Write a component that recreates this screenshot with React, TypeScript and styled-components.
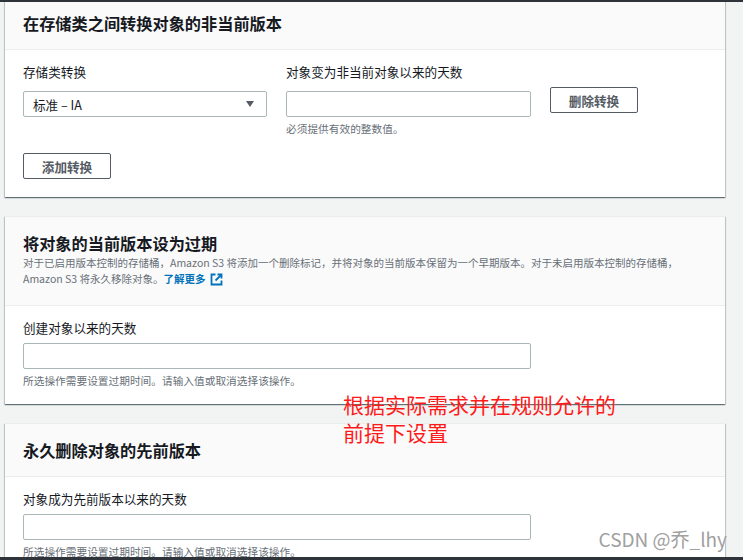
import React from 'react';
import styled, { createGlobalStyle } from 'styled-components';

const Global = createGlobalStyle`
  html, body { margin: 0; padding: 0; background: #f2f3f3; }
  body {
    font-family: "Noto Sans CJK SC", "Noto Sans", sans-serif;
    color: #16191f;
    overflow: hidden;
    height: 560px;
  }
`;

const Edge = styled.div<{ $side: 'top' | 'bottom'; $h: number }>`
  position: fixed;
  left: 0;
  right: 0;
  ${(p) => p.$side}: 0;
  height: ${(p) => p.$h}px;
  background: #2f343b;
  z-index: 5;
`;

const Page = styled.main`
  width: 720px;
  margin: -4px 0 0 5px;
  display: flex;
  flex-direction: column;
  gap: 19px;
`;

const Card = styled.section`
  background: #ffffff;
  border-top: 1px solid #eaeded;
  box-shadow: 0 1px 1px 0 rgba(0, 28, 36, 0.45), 1px 1px 1px 0 rgba(0, 28, 36, 0.15),
    -1px 1px 1px 0 rgba(0, 28, 36, 0.15);
`;

const Header = styled.header<{ $desc?: boolean }>`
  background: #fafafa;
  border-bottom: 1px solid #eaeded;
  padding: 15px 18px ${(p) => (p.$desc ? 18 : 15)}px;
`;

const Title = styled.h2`
  margin: 0;
  font-size: 16.2px;
  line-height: 22px;
  font-weight: 700;
  color: #16191f;
`;

const Desc = styled.p`
  margin: 1px 0 0;
  font-size: 10.5px;
  line-height: 16px;
  color: #687078;
`;

const Link = styled.a`
  color: #0073bb;
  font-weight: 700;
  text-decoration: none;
  display: inline-flex;
  align-items: center;
  gap: 5px;
  svg { display: block; }
`;

const Body = styled.div<{ $bottom: number }>`
  padding: 13px 18px ${(p) => p.$bottom}px;
`;

const Row = styled.div`
  display: grid;
  grid-template-columns: 244px 245px 88px;
  column-gap: 19px;
  align-items: start;
`;

const Field = styled.div<{ $width?: number }>`
  display: flex;
  flex-direction: column;
  width: ${(p) => (p.$width ? `${p.$width}px` : 'auto')};
`;

const Label = styled.label<{ $gap: number }>`
  font-size: 12.6px;
  line-height: 18px;
  color: #16191f;
  margin-bottom: ${(p) => p.$gap}px;
`;

const Input = styled.div`
  box-sizing: border-box;
  height: 26px;
  border: 1px solid #aab7b8;
  border-radius: 2px;
  background: #fff;
`;

const Select = styled(Input)`
  display: flex;
  align-items: center;
  justify-content: space-between;
  padding: 0 12px 0 9px;
  font-size: 12.6px;
  color: #16191f;
`;

const Caret = styled.span`
  width: 0;
  height: 0;
  border-left: 4px solid transparent;
  border-right: 4px solid transparent;
  border-top: 6px solid #545b64;
`;

const Hint = styled.div`
  margin-top: 5px;
  font-size: 10.7px;
  line-height: 14px;
  color: #687078;
`;

const Button = styled.button<{ $top?: number }>`
  box-sizing: border-box;
  width: 88px;
  height: 26px;
  margin-top: ${(p) => p.$top ?? 0}px;
  border: 1px solid #545b64;
  border-radius: 2px;
  background: #fff;
  color: #545b64;
  font-family: inherit;
  font-size: 12.6px;
  font-weight: 700;
  padding: 0;
  cursor: pointer;
`;

const Note = styled.div`
  position: absolute;
  left: 343px;
  top: 390px;
  font-size: 21px;
  line-height: 28px;
  color: #ff1a1a;
  z-index: 3;
`;

const Watermark = styled.div`
  position: absolute;
  right: 16px;
  top: 528px;
  font-size: 19px;
  line-height: 22px;
  color: #a0a0a0;
  text-shadow: 0 0 1px #ffffff;
  z-index: 3;
`;

const ExternalIcon = () => (
  <svg width="13" height="13" viewBox="0 0 13 13" fill="none" stroke="#0073bb" strokeWidth="1.8">
    <path d="M5.5 1.5H1.5v10h10v-4" />
    <path d="M7.5 1.5h4v4" />
    <path d="M11.5 1.5 5.5 7.5" />
  </svg>
);

export default function App() {
  return (
    <>
      <Global />
      <Edge $side="top" $h={2} />
      <Page>
        <Card>
          <Header>
            <Title>在存储类之间转换对象的非当前版本</Title>
          </Header>
          <Body $bottom={18}>
            <Row>
              <Field>
                <Label $gap={10}>存储类转换</Label>
                <Select>
                  <span>标准 – IA</span>
                  <Caret />
                </Select>
              </Field>
              <Field>
                <Label $gap={10}>对象变为非当前对象以来的天数</Label>
                <Input />
                <Hint>必须提供有效的整数值。</Hint>
              </Field>
              <Button $top={24}>删除转换</Button>
            </Row>
            <Button $top={17}>添加转换</Button>
          </Body>
        </Card>

        <Card>
          <Header $desc>
            <Title>将对象的当前版本设为过期</Title>
            <Desc>
              对于已启用版本控制的存储桶，Amazon S3 将添加一个删除标记，并将对象的当前版本保留为一个早期版本。对于未启用版本控制的存储桶，
              <br />
              Amazon S3 将永久移除对象。
              <Link href="#">
                了解更多
                <ExternalIcon />
              </Link>
            </Desc>
          </Header>
          <Body $bottom={16}>
            <Field $width={508}>
              <Label $gap={6}>创建对象以来的天数</Label>
              <Input />
              <Hint>所选操作需要设置过期时间。请输入值或取消选择该操作。</Hint>
            </Field>
          </Body>
        </Card>

        <Card>
          <Header>
            <Title>永久删除对象的先前版本</Title>
          </Header>
          <Body $bottom={16}>
            <Field $width={508}>
              <Label $gap={6}>对象成为先前版本以来的天数</Label>
              <Input />
              <Hint>所选操作需要设置过期时间。请输入值或取消选择该操作。</Hint>
            </Field>
          </Body>
        </Card>
      </Page>
      <Note>
        根据实际需求并在规则允许的
        <br />
        前提下设置
      </Note>
      <Watermark>CSDN @乔_lhy</Watermark>
      <Edge $side="bottom" $h={3} />
    </>
  );
}
